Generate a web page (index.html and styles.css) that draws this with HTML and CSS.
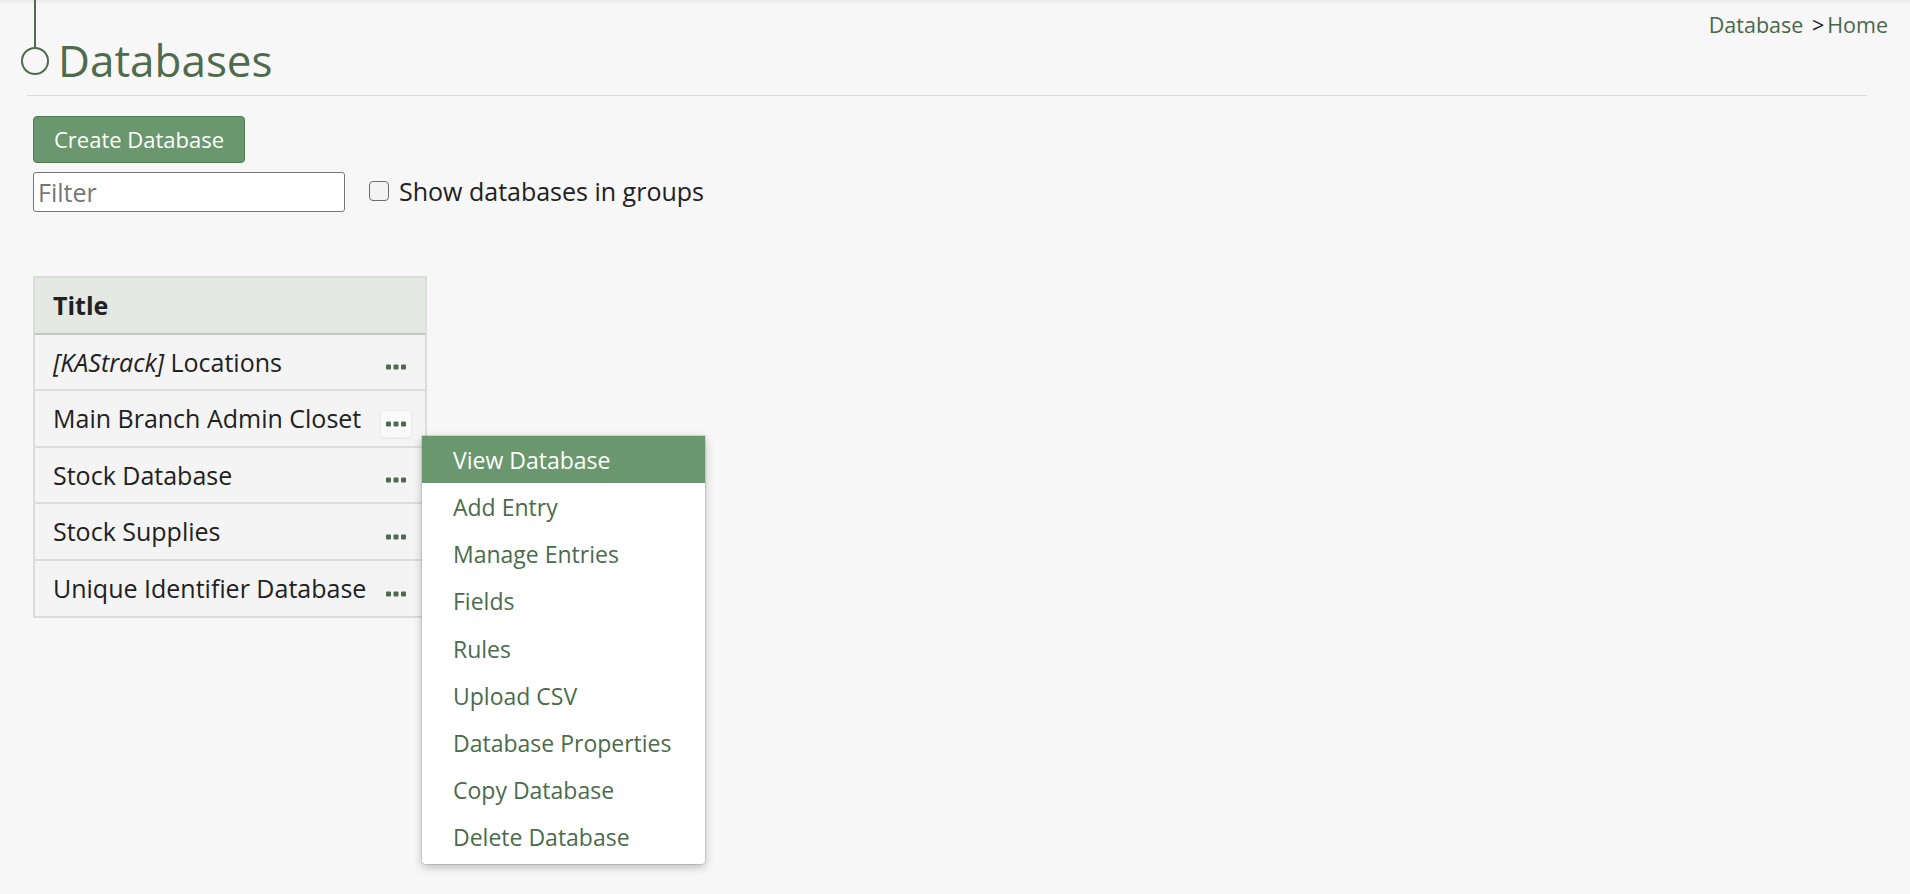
FILE: index.html
```html
<!DOCTYPE html>
<html lang="en">
<head>
    <meta charset="UTF-8">
    <meta name="viewport" content="width=device-width, initial-scale=1.0">
    <title>Databases</title>
    <link rel="stylesheet" href="styles.css">
</head>
<body>
    <div class="page">
        <!-- Page header -->
        <header class="page-head">
            <div class="title-wrap">
                <div class="marker">
                    <span class="marker-line"></span>
                    <span class="marker-dot"></span>
                </div>
                <h1 class="page-title">Databases</h1>
            </div>
            <nav class="crumbs">
                <a href="#">Database</a>
                <span class="crumb-sep">&gt;</span><a href="#">Home</a>
            </nav>
        </header>
        <hr class="divider">

        <!-- Toolbar -->
        <section class="toolbar">
            <button class="btn-primary" type="button">Create Database</button>
            <div class="filter-row">
                <input class="filter" type="text" placeholder="Filter">
                <label class="group-toggle">
                    <input type="checkbox">
                    <span>Show databases in groups</span>
                </label>
            </div>
        </section>

        <!-- Databases list -->
        <div class="db-table">
            <div class="db-head">Title</div>

            <div class="db-row">
                <span class="db-name"><em>[KAStrack]</em> Locations</span>
                <div class="actions">
                    <button class="dots" type="button">
                        <svg width="20" height="6" viewBox="0 0 20 6"><rect x="0" y="0.5" width="5" height="5" rx="1"/><rect x="7.5" y="0.5" width="5" height="5" rx="1"/><rect x="15" y="0.5" width="5" height="5" rx="1"/></svg>
                    </button>
                </div>
            </div>

            <div class="db-row">
                <span class="db-name">Main Branch Admin Closet</span>
                <div class="actions">
                    <button class="dots is-open" type="button">
                        <svg width="20" height="6" viewBox="0 0 20 6"><rect x="0" y="0.5" width="5" height="5" rx="1"/><rect x="7.5" y="0.5" width="5" height="5" rx="1"/><rect x="15" y="0.5" width="5" height="5" rx="1"/></svg>
                    </button>
                    <ul class="menu">
                        <li class="active"><a href="#">View Database</a></li>
                        <li><a href="#">Add Entry</a></li>
                        <li><a href="#">Manage Entries</a></li>
                        <li><a href="#">Fields</a></li>
                        <li><a href="#">Rules</a></li>
                        <li><a href="#">Upload CSV</a></li>
                        <li><a href="#">Database Properties</a></li>
                        <li><a href="#">Copy Database</a></li>
                        <li><a href="#">Delete Database</a></li>
                    </ul>
                </div>
            </div>

            <div class="db-row">
                <span class="db-name">Stock Database</span>
                <div class="actions">
                    <button class="dots" type="button">
                        <svg width="20" height="6" viewBox="0 0 20 6"><rect x="0" y="0.5" width="5" height="5" rx="1"/><rect x="7.5" y="0.5" width="5" height="5" rx="1"/><rect x="15" y="0.5" width="5" height="5" rx="1"/></svg>
                    </button>
                </div>
            </div>

            <div class="db-row">
                <span class="db-name">Stock Supplies</span>
                <div class="actions">
                    <button class="dots" type="button">
                        <svg width="20" height="6" viewBox="0 0 20 6"><rect x="0" y="0.5" width="5" height="5" rx="1"/><rect x="7.5" y="0.5" width="5" height="5" rx="1"/><rect x="15" y="0.5" width="5" height="5" rx="1"/></svg>
                    </button>
                </div>
            </div>

            <div class="db-row">
                <span class="db-name">Unique Identifier Database</span>
                <div class="actions">
                    <button class="dots" type="button">
                        <svg width="20" height="6" viewBox="0 0 20 6"><rect x="0" y="0.5" width="5" height="5" rx="1"/><rect x="7.5" y="0.5" width="5" height="5" rx="1"/><rect x="15" y="0.5" width="5" height="5" rx="1"/></svg>
                    </button>
                </div>
            </div>
        </div>
    </div>
</body>
</html>
```

FILE: styles.css
```css
html, body {
    margin: 0;
    height: 100%;
}
body {
    font-family: "Open Sans", "Noto Sans", sans-serif;
    font-size: 25px;
    color: #212121;
    background: #f7f7f7;
    box-shadow: inset 0 5px 5px -4px rgba(0, 0, 0, 0.08);
}
a {
    text-decoration: none;
    color: inherit;
}

/* header */
.page-head {
    display: flex;
    justify-content: space-between;
    margin: 0 22px 0 21px;
}
.title-wrap {
    display: flex;
    align-items: flex-start;
}
.marker {
    width: 28px;
    display: flex;
    flex-direction: column;
    align-items: center;
}
.marker-line {
    width: 2px;
    height: 47px;
    background: #4e6b4e;
}
.marker-dot {
    width: 24px;
    height: 24px;
    border: 2px solid #4e6b4e;
    border-radius: 50%;
}
.page-title {
    margin: 38px 0 0 9px;
    font-size: 44px;
    line-height: 44px;
    font-weight: 400;
    color: #4e6b4e;
}
.crumbs {
    margin-top: 12px;
    font-size: 21.5px;
    line-height: 25px;
    color: #4a664a;
}
.crumb-sep {
    color: #222;
    margin-left: 3px;
    margin-right: 3px;
}
.divider {
    margin: 13px 43px 0 27px;
    border: 0;
    border-top: 1px solid #dcdcdc;
}

/* toolbar */
.toolbar {
    margin-left: 33px;
    padding-top: 20px;
}
.btn-primary {
    font-family: inherit;
    font-size: 22px;
    line-height: 29px;
    padding: 8px 20px;
    color: #fff;
    background: #6a976e;
    border: 1px solid #4f7a53;
    border-radius: 4px;
    cursor: pointer;
}
.filter-row {
    display: flex;
    align-items: center;
    margin-top: 9px;
}
.filter {
    box-sizing: border-box;
    width: 312px;
    height: 40px;
    padding: 0 4px;
    font-family: inherit;
    font-size: 25px;
    color: #222;
    background: #fff;
    border: 1px solid #767676;
    border-radius: 3px;
}
.filter::placeholder {
    color: #777;
}
.group-toggle {
    display: flex;
    align-items: center;
    gap: 10px;
    margin-left: 24px;
    margin-top: -3px;
}
.group-toggle input {
    appearance: none;
    width: 20px;
    height: 20px;
    margin: 0;
    border: 1px solid #6e6e6e;
    border-radius: 4px;
    background: #f3f3f3;
}

/* database list */
.db-table {
    width: 390px;
    margin: 64px 0 0 33px;
    border: 2px solid #dcdcdc;
    border-bottom: 0;
}
.db-head {
    padding: 11px 18px;
    line-height: 32.6px;
    font-weight: 700;
    background: #e4e9e4;
    border-bottom: 2px solid #c4c6c4;
}
.db-row {
    display: flex;
    justify-content: space-between;
    align-items: center;
    padding: 11px 13px 11px 18px;
    line-height: 32.6px;
    background: #f4f4f4;
    border-bottom: 2px solid #dcdcdc;
}
.actions {
    position: relative;
    align-self: flex-end;
    margin-bottom: -3px;
}
.dots {
    display: flex;
    align-items: center;
    justify-content: center;
    width: 32px;
    height: 28px;
    padding: 0;
    background: transparent;
    border: 1px solid transparent;
    border-radius: 4px;
    fill: #4e6b4f;
    cursor: pointer;
}
.dots.is-open {
    background: #fafafa;
    border-color: #ececec;
    box-shadow: 0 1px 2px rgba(0, 0, 0, 0.06);
}

/* dropdown */
.menu {
    position: absolute;
    left: 42px;
    top: 26px;
    z-index: 10;
    width: 283px;
    margin: 0;
    padding: 0 0 4px;
    list-style: none;
    background: #fff;
    border-radius: 0 0 4px 4px;
    box-shadow: 0 0 0 1px rgba(0, 0, 0, 0.1), 0 3px 10px rgba(0, 0, 0, 0.25);
}
.menu li a {
    display: block;
    height: 45.2px;
    padding: 2px 31px 0;
    font-size: 23px;
    line-height: 45px;
    color: #4b6b4d;
    white-space: nowrap;
}
.menu li.active a {
    background: #6a976e;
    color: #fff;
}
```
